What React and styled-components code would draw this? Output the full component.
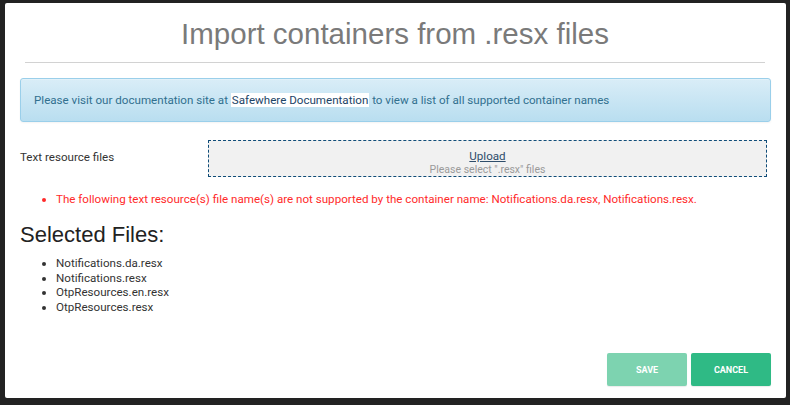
import styled, { createGlobalStyle } from 'styled-components'

const GlobalStyle = createGlobalStyle`
  html, body {
    margin: 0;
    padding: 0;
    background: #222222;
  }
  body {
    font-family: Roboto, "Noto Sans", sans-serif;
  }
`

const Page = styled.div`
  width: 790px;
  height: 405px;
  padding: 3px 4px 7px 5px;
  box-sizing: border-box;
`

const Modal = styled.div`
  height: 100%;
  background: #ffffff;
  border-radius: 2px;
  display: flex;
  flex-direction: column;
`

const Header = styled.div`
  margin: 0 21px 0 20px;
  height: 59px;
  border-bottom: 1px solid #d2d2d2;
  display: flex;
  align-items: center;
  justify-content: center;
`

const Title = styled.h1`
  margin: 0;
  font-family: "Liberation Sans", Arial, sans-serif;
  font-weight: normal;
  font-size: 29.5px;
  color: #7a7a7a;
  line-height: 1;
  padding-top: 2px;
`

const Body = styled.div`
  padding: 15px 15px 0 15px;
  flex: 1;
`

const Alert = styled.div`
  height: 44px;
  box-sizing: border-box;
  padding: 0 13px;
  display: flex;
  align-items: center;
  border: 1px solid #9acfea;
  border-radius: 3px;
  background: linear-gradient(to bottom, #d9edf7 0%, #b9def0 100%);
  color: #31708f;
  font-size: 11.6px;
  box-shadow: inset 0 1px 0 rgba(255, 255, 255, 0.25), 0 1px 2px rgba(0, 0, 0, 0.05);
`

const DocLink = styled.span`
  background: #ffffff;
  color: #1d4466;
  padding: 0 1px;
`

const FormRow = styled.div`
  margin-top: 18px;
  display: flex;
  align-items: center;
  padding-right: 4px;
`

const Label = styled.div`
  width: 188px;
  font-size: 11.6px;
  color: #333333;
  margin-top: -3px;
`

const DropZone = styled.div`
  flex: 1;
  height: 37px;
  box-sizing: border-box;
  border: 1px dashed #0f4c78;
  background: #f1f1f1;
  display: flex;
  flex-direction: column;
  align-items: center;
  padding-top: 8px;
`

const UploadLink = styled.a`
  font-size: 11.6px;
  color: #2e4d6b;
  text-decoration: underline;
  line-height: 14px;
`

const Hint = styled.div`
  font-size: 10.5px;
  color: #9a9a9a;
  line-height: 14px;
`

const BulletList = styled.ul`
  margin: ${(p) => p.$top}px 0 0 0;
  padding-left: 36px;
  font-size: 11.6px;
  color: ${(p) => p.$color};
  line-height: ${(p) => p.$lh}px;
`

const SectionTitle = styled.h2`
  margin: 16px 0 0 0;
  font-family: "Liberation Sans", Arial, sans-serif;
  font-weight: normal;
  font-size: 22px;
  color: #222222;
  line-height: 26px;
`

const Footer = styled.div`
  display: flex;
  justify-content: flex-end;
  gap: 4px;
  padding: 0 15px 12px 0;
`

const Button = styled.button`
  width: 80px;
  height: 33px;
  border: none;
  border-radius: 2px;
  background: ${(p) => (p.$disabled ? '#7dd3b0' : '#2fba85')};
  color: #ffffff;
  font-family: Roboto, sans-serif;
  font-weight: bold;
  font-size: 9px;
  text-transform: uppercase;
  cursor: pointer;
  box-shadow: 0 1px 1px rgba(0, 0, 0, 0.08);
`

const files = [
  'Notifications.da.resx',
  'Notifications.resx',
  'OtpResources.en.resx',
  'OtpResources.resx',
]

export default function App() {
  return (
    <Page>
      <GlobalStyle />
      <Modal>
        <Header>
          <Title>Import containers from .resx files</Title>
        </Header>
        <Body>
          <Alert>
            <span>
              Please visit our documentation site at{' '}
              <DocLink>Safewhere Documentation</DocLink> to view a list of all
              supported container names
            </span>
          </Alert>
          <FormRow>
            <Label>Text resource files</Label>
            <DropZone>
              <UploadLink>Upload</UploadLink>
              <Hint>Please select ".resx" files</Hint>
            </DropZone>
          </FormRow>
          <BulletList $top={15} $color="#ff2a2a" $lh={14}>
            <li>
              The following text resource(s) file name(s) are not supported by
              the container name: Notifications.da.resx, Notifications.resx.
            </li>
          </BulletList>
          <SectionTitle>Selected Files:</SectionTitle>
          <BulletList $top={8} $color="#333333" $lh={14.5}>
            {files.map((f) => (
              <li key={f}>{f}</li>
            ))}
          </BulletList>
        </Body>
        <Footer>
          <Button $disabled>Save</Button>
          <Button>Cancel</Button>
        </Footer>
      </Modal>
    </Page>
  )
}
